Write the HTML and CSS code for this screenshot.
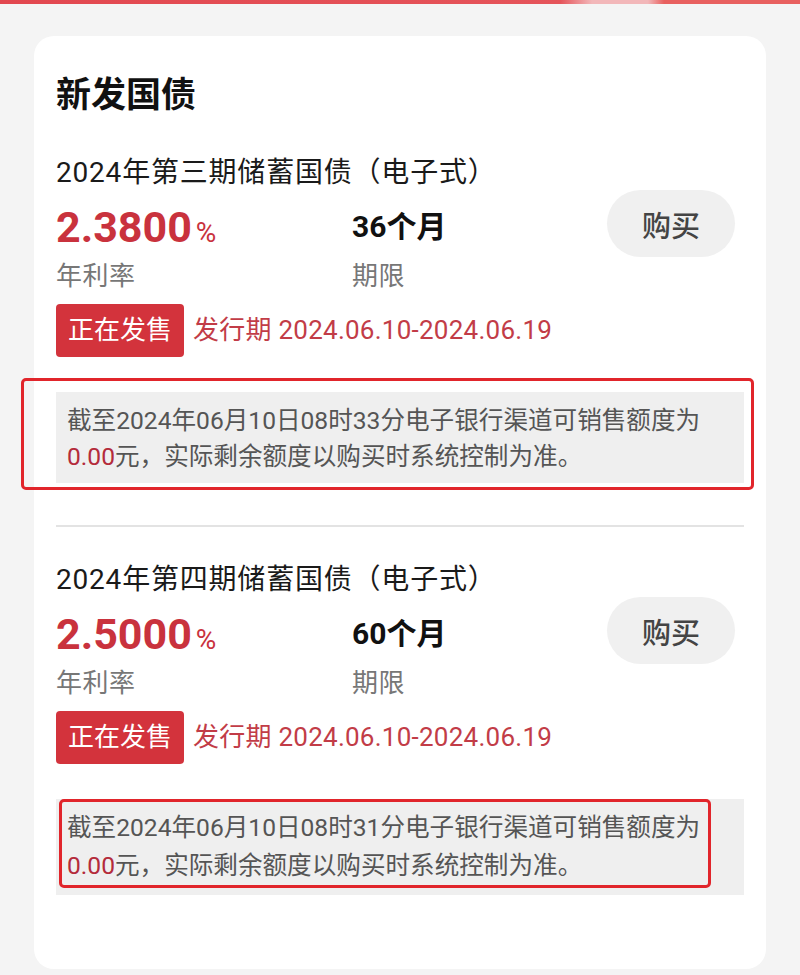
FILE: index.html
```html
<!DOCTYPE html>
<html lang="zh-CN">
<head>
<meta charset="utf-8">
<title>新发国债</title>
<link rel="stylesheet" href="styles.css">
</head>
<body>
<div class="topbar"></div>
<main class="card">
  <h1 class="title">新发国债</h1>

  <section class="bond">
    <h2 class="bond-name">2024年第三期储蓄国债（电子式）</h2>
    <div class="bond-main">
      <div class="col rate-col">
        <div class="rate">2.3800<span class="pct">%</span></div>
        <div class="label">年利率</div>
      </div>
      <div class="col term-col">
        <div class="term">36个月</div>
        <div class="label">期限</div>
      </div>
      <button class="buy">购买</button>
    </div>
    <div class="status">
      <span class="badge">正在发售</span>
      <span class="period">发行期 2024.06.10-2024.06.19</span>
    </div>
    <div class="notice">
      <p class="line">截至2024年06月10日08时33分电子银行渠道可销售额度为</p>
      <p class="line"><span class="amount">0.00</span>元，实际剩余额度以购买时系统控制为准。</p>
      <div class="mark mark-a"></div>
    </div>
  </section>

  <hr class="divider">

  <section class="bond">
    <h2 class="bond-name">2024年第四期储蓄国债（电子式）</h2>
    <div class="bond-main">
      <div class="col rate-col">
        <div class="rate">2.5000<span class="pct">%</span></div>
        <div class="label">年利率</div>
      </div>
      <div class="col term-col">
        <div class="term">60个月</div>
        <div class="label">期限</div>
      </div>
      <button class="buy">购买</button>
    </div>
    <div class="status">
      <span class="badge">正在发售</span>
      <span class="period">发行期 2024.06.10-2024.06.19</span>
    </div>
    <div class="notice notice-b">
      <p class="line">截至2024年06月10日08时31分电子银行渠道可销售额度为</p>
      <p class="line"><span class="amount">0.00</span>元，实际剩余额度以购买时系统控制为准。</p>
      <div class="mark mark-b"></div>
    </div>
  </section>
</main>
</body>
</html>
```

FILE: styles.css
```css
* { box-sizing: border-box; }

html, body {
  margin: 0;
  padding: 0;
}

body {
  background: #f4f4f4;
  font-family: Roboto, "Noto Sans CJK SC", sans-serif;
  color: #111;
  height: 975px;
  overflow: hidden;
}

.topbar {
  height: 4px;
  background: linear-gradient(90deg, #e2474f 0%, #e5545a 70%, #f2b7b9 74%, #f2b7b9 81%, #e8605f 83%, #e8605f 100%);
}

.card {
  margin: 32px 0 0 34px;
  width: 732px;
  background: #fff;
  border-radius: 20px;
  padding: 36px 22px 74px;
}

.title {
  margin: 0;
  height: 48px;
  font-size: 35px;
  line-height: 48px;
  font-weight: 700;
  color: #111;
}

.bond-name {
  margin: 35px 0 0;
  height: 36px;
  font-size: 28px;
  line-height: 36px;
  font-weight: 400;
  color: #1a1a1a;
  letter-spacing: 0.8px;
}

.bond-main {
  display: flex;
  align-items: flex-start;
  height: 103px;
}

.col {
  display: flex;
  flex-direction: column;
  padding-top: 12px;
  gap: 7px;
}

.rate-col { width: 296px; }
.term-col { flex: 1; }

.rate {
  height: 48px;
  font-size: 43px;
  line-height: 48px;
  font-weight: 700;
  color: #c9323d;
}

.pct {
  font-size: 28px;
  font-weight: 400;
  margin-left: 4px;
}

.term {
  height: 48px;
  font-size: 30px;
  line-height: 48px;
  font-weight: 700;
  color: #111;
}

.label {
  height: 36px;
  font-size: 26px;
  line-height: 36px;
  color: #777;
  letter-spacing: 0.5px;
}

.buy {
  width: 128px;
  height: 67px;
  margin-top: -1px;
  margin-right: 9px;
  border: none;
  border-radius: 34px;
  background: #f0f0f0;
  font-family: "Noto Sans CJK SC", sans-serif;
  font-size: 29px;
  font-weight: 500;
  color: #444;
  padding: 0;
}

.status {
  display: flex;
  align-items: center;
  height: 53px;
  margin-top: 10px;
  gap: 9px;
}

.badge {
  display: block;
  width: 128px;
  height: 53px;
  text-align: center;
  background: #d3333c;
  color: #fff;
  font-size: 26px;
  line-height: 53px;
  border-radius: 4px;
}

.period {
  display: block;
  height: 37px;
  font-size: 26px;
  line-height: 37px;
  color: #c23c47;
  letter-spacing: 0.25px;
}

.notice {
  position: relative;
  margin-top: 35px;
  background: #efefef;
  padding: 11px 11px 8px;
}

.notice-b { padding-bottom: 11px; }

.line {
  margin: 0;
  height: 36px;
  font-size: 24.6px;
  line-height: 36px;
  color: #555;
  white-space: nowrap;
}

.notice-b .line + .line { margin-top: 2px; }

.amount { color: #b42b3b; }

.mark {
  position: absolute;
  border: 3px solid #e1252b;
  border-radius: 5px;
  pointer-events: none;
}

.mark-a { top: -14px; left: -35px; right: -10px; bottom: -7px; }
.mark-b { top: 0; left: 3px; right: 33px; bottom: 7px; }

.divider {
  margin: 42px 0 0;
  border: none;
  height: 2px;
  background: #e3e3e3;
}
```
